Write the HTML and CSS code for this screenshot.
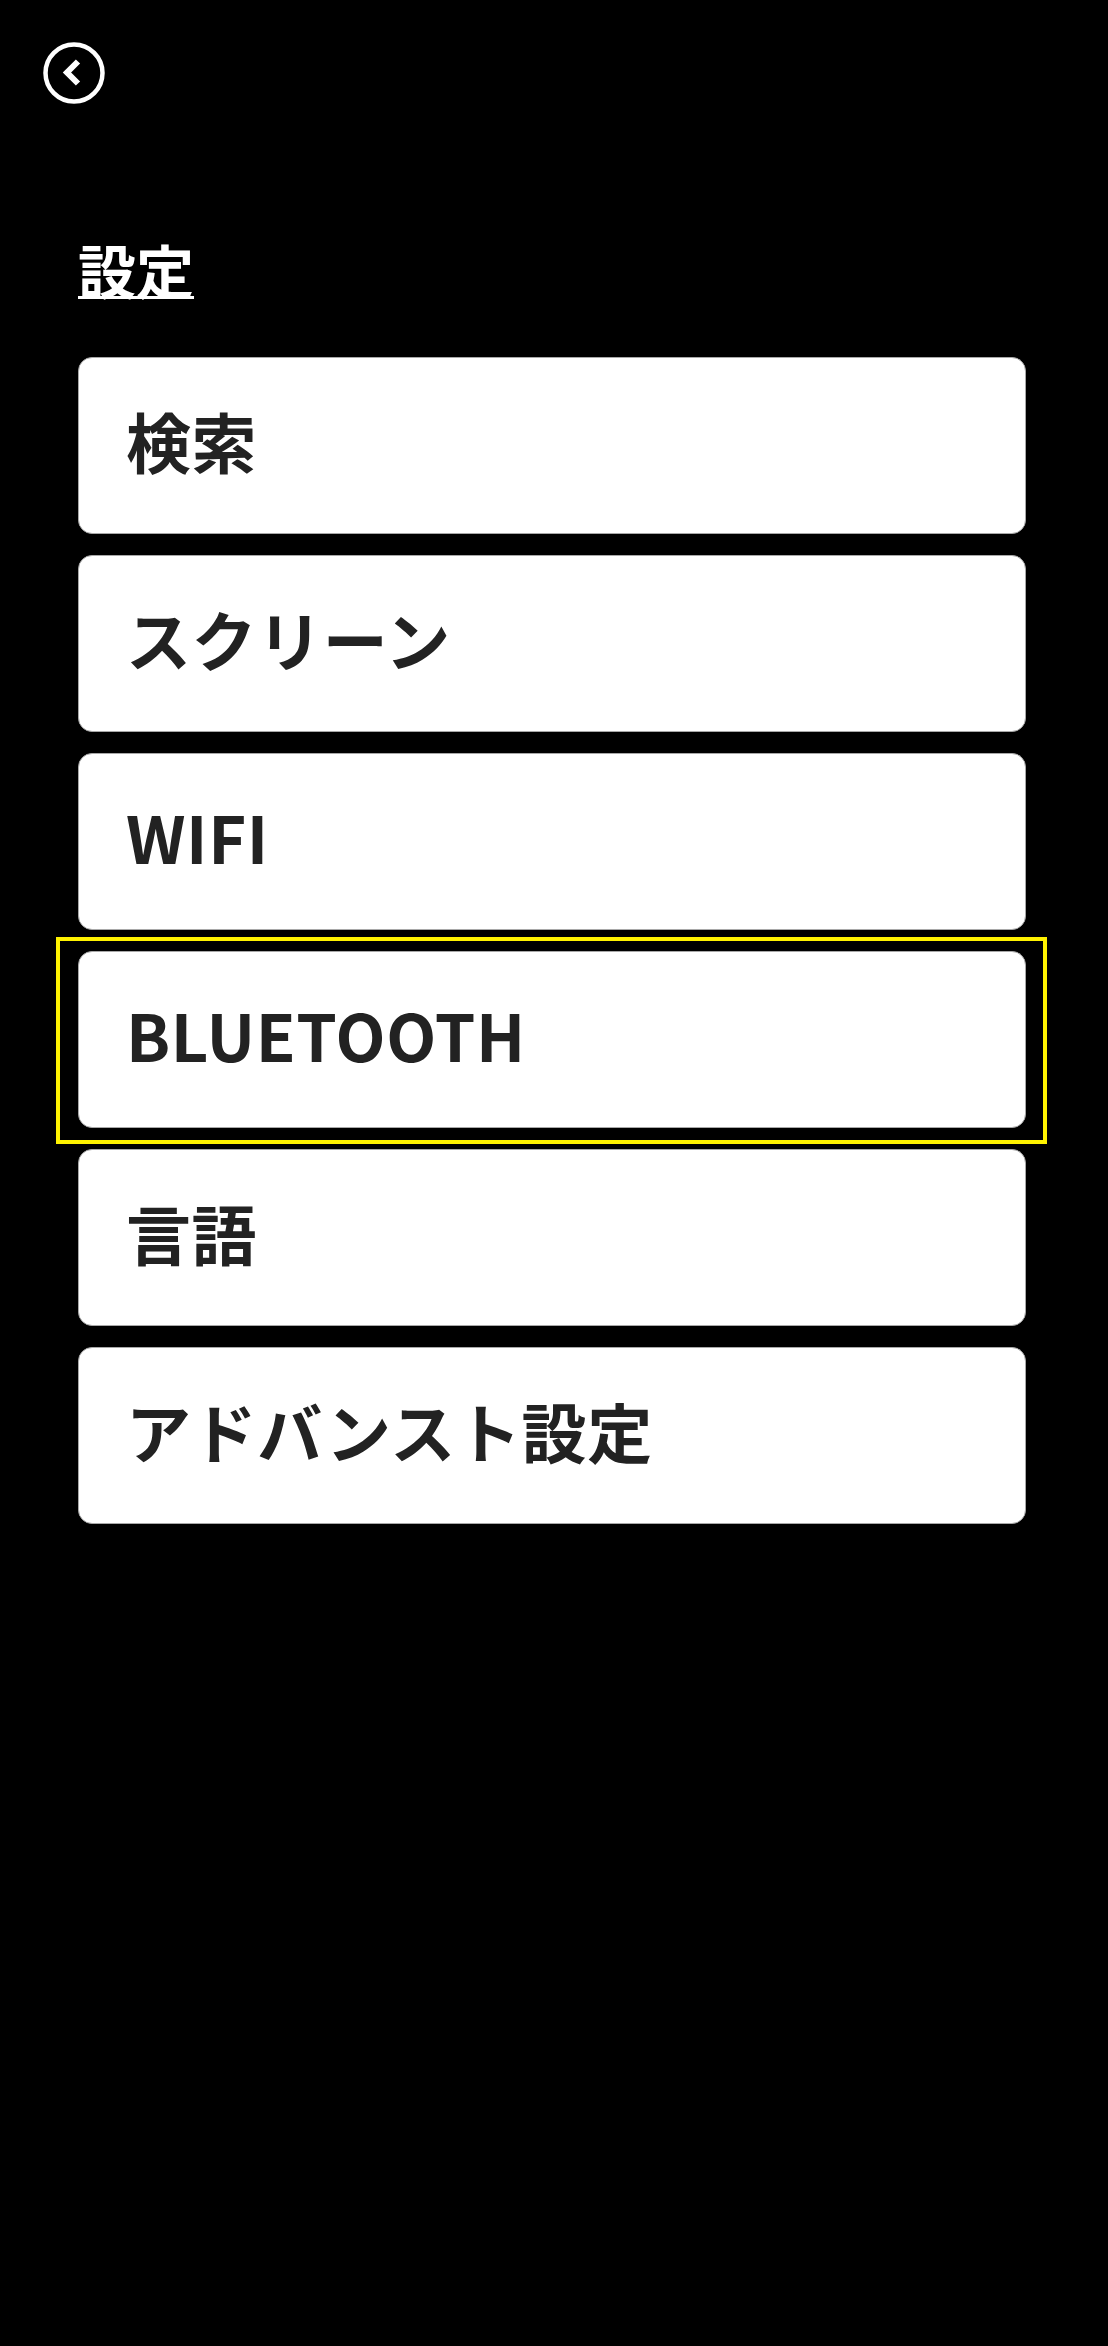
FILE: index.html
```html
<!DOCTYPE html>
<html lang="ja">
<head>
<meta charset="utf-8">
<title>設定</title>
<link rel="stylesheet" href="styles.css">
</head>
<body>
<div class="screen">
  <header class="topbar">
    <button class="back" aria-label="戻る">
      <svg width="62" height="62" viewBox="0 0 62 62">
        <circle cx="31" cy="31" r="28.5" fill="none" stroke="#fff" stroke-width="4.5"/>
        <polyline points="35,19.5 24,30.5 35,41.5" fill="none" stroke="#fff" stroke-width="6" stroke-linejoin="miter" stroke-linecap="butt"/>
      </svg>
    </button>
  </header>
  <h1 class="title">設定</h1>
  <ul class="menu">
    <li class="item"><span class="label">検索</span></li>
    <li class="item"><span class="label">スクリーン</span></li>
    <li class="item"><span class="label">WIFI</span></li>
    <li class="item focused"><span class="label">BLUETOOTH</span></li>
    <li class="item"><span class="label">言語</span></li>
    <li class="item"><span class="label">アドバンスト設定</span></li>
  </ul>
</div>
</body>
</html>
```
FILE: styles.css
```css
html, body {
  margin: 0;
  padding: 0;
  background: #000;
}
body {
  font-family: "Noto Sans CJK JP", "Noto Sans", sans-serif;
  width: 1108px;
  min-height: 2346px;
}
.screen {
  display: flex;
  flex-direction: column;
}
.topbar {
  padding: 42px 0 0 43px;
  height: 62px;
}
.back {
  display: block;
  width: 62px;
  height: 62px;
  padding: 0;
  margin: 0;
  border: 0;
  background: none;
}
.back svg {
  display: block;
}
.title {
  margin: 136px 0 0 78px;
  font-size: 58px;
  line-height: 58px;
  font-weight: 700;
  color: #fff;
  text-decoration: underline;
  text-decoration-thickness: 3px;
  align-self: flex-start;
}
.menu {
  list-style: none;
  margin: 59px 0 0 78px;
  padding: 0;
  width: 948px;
  display: flex;
  flex-direction: column;
  gap: 21px;
}
.item {
  position: relative;
  box-sizing: border-box;
  height: 177px;
  background: #fff;
  border: 1px solid #a8a8a8;
  border-radius: 14px;
  display: flex;
  align-items: center;
  padding: 0 0 10px 47px;
}
.label {
  font-size: 65px;
  font-weight: 700;
  color: #222;
  line-height: 1;
  letter-spacing: 0.6px;
}
.focused::after {
  content: "";
  position: absolute;
  top: -15px;
  bottom: -17px;
  left: -23px;
  right: -22px;
  border: 4.5px solid #fff200;
  pointer-events: none;
}
```
